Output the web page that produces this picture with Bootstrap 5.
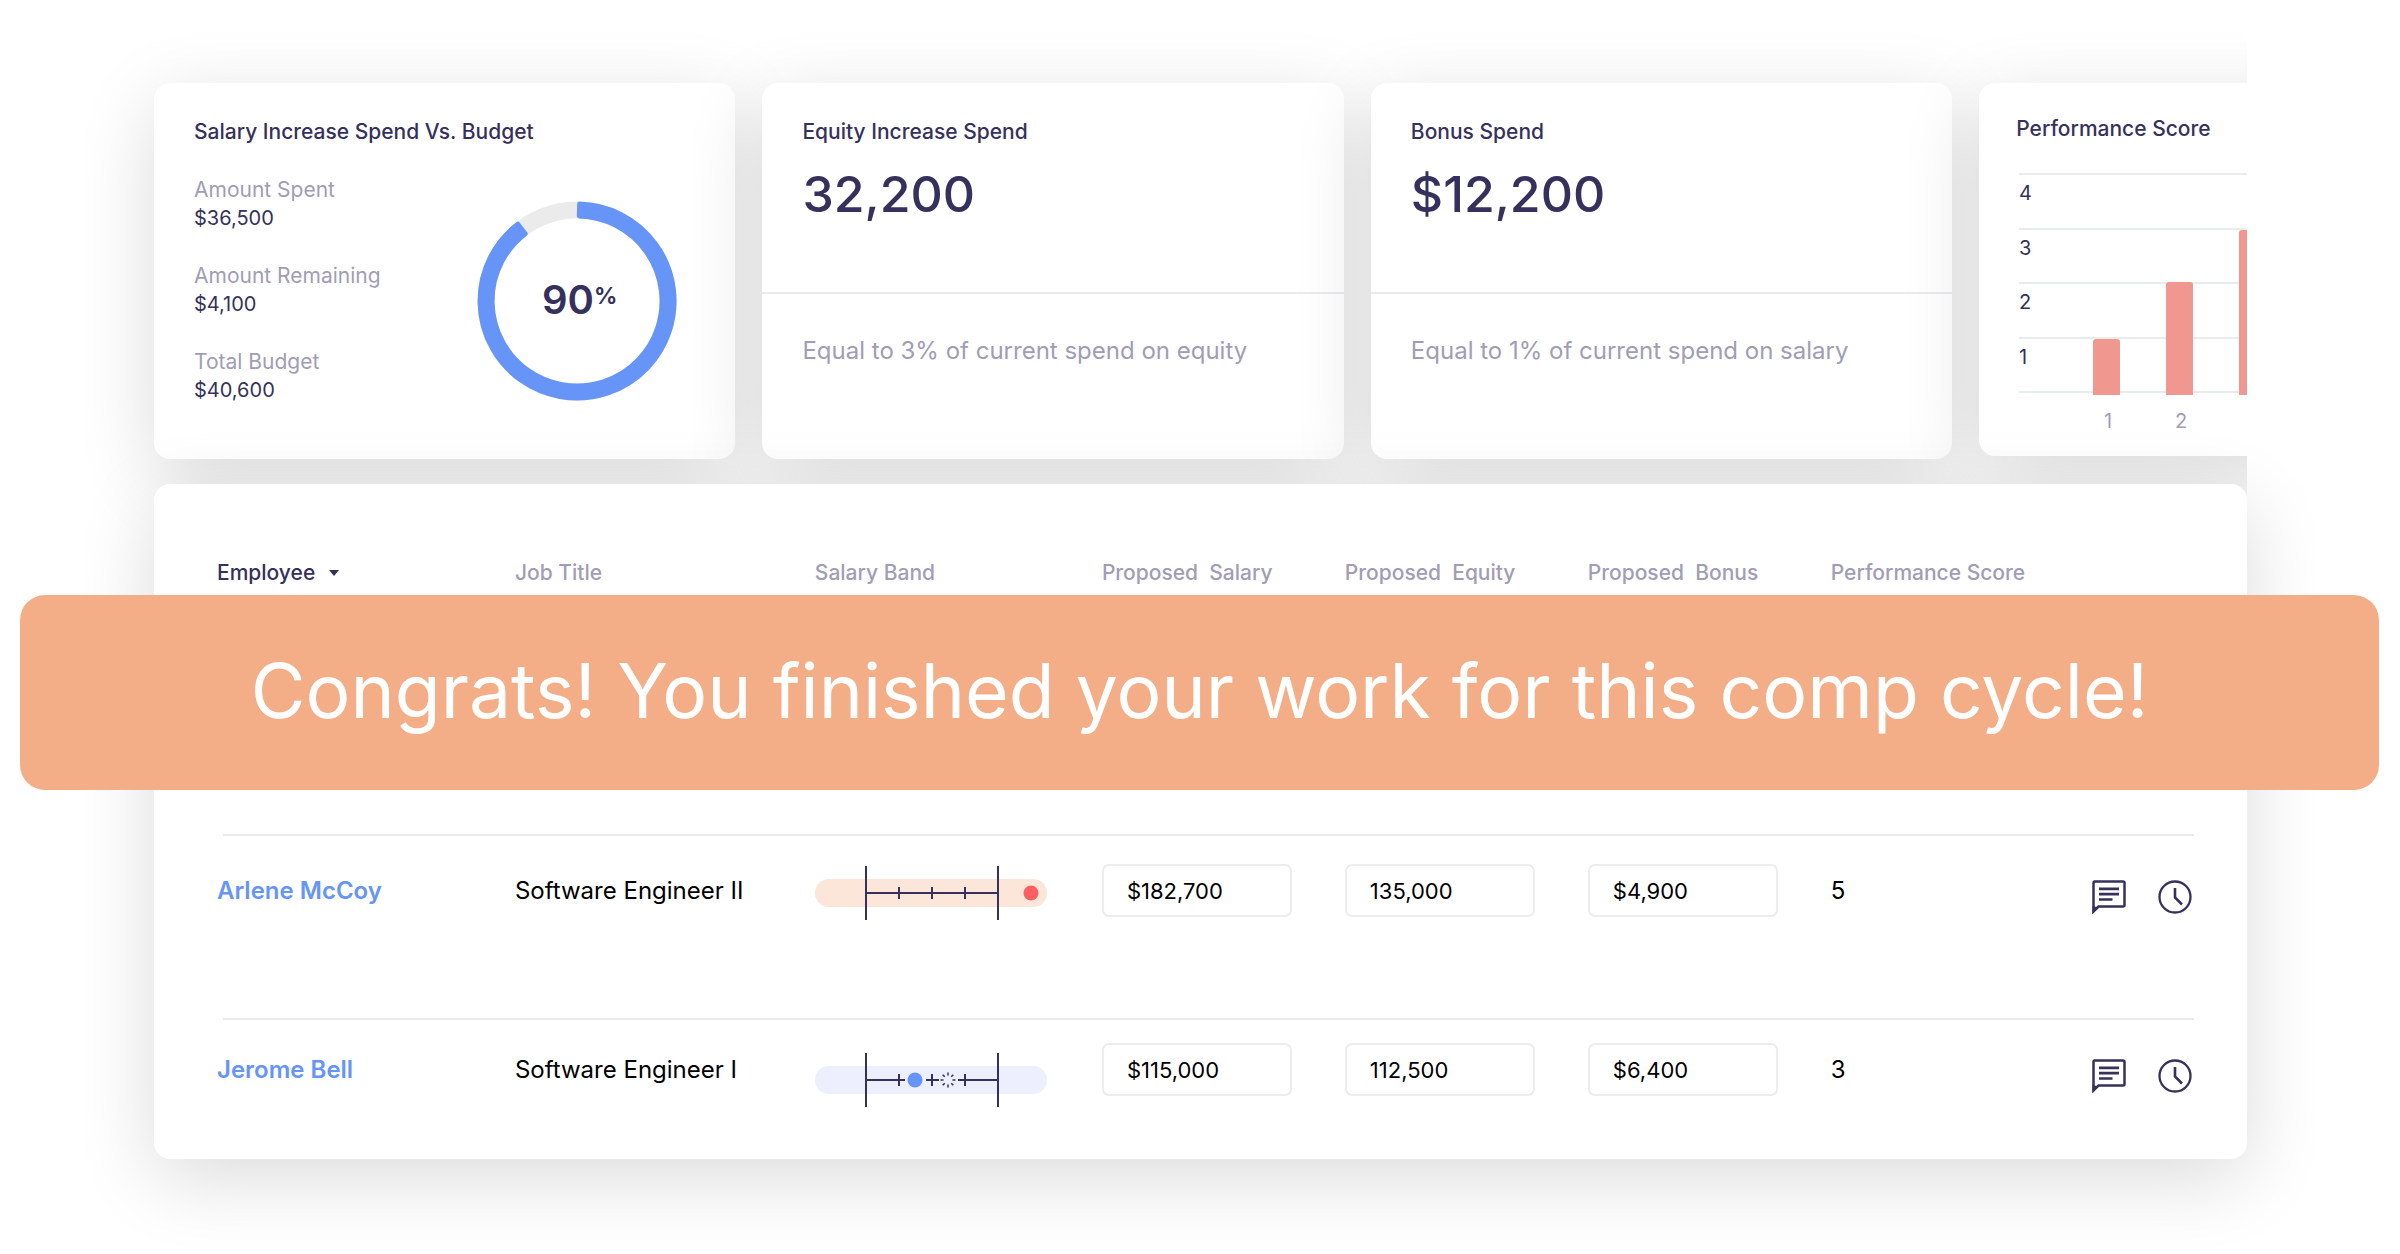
<!DOCTYPE html>
<html lang="en">
<head>
<meta charset="utf-8">
<meta name="viewport" content="width=device-width, initial-scale=1">
<title>Compensation cycle</title>
<link rel="stylesheet" href="https://cdn.jsdelivr.net/npm/bootstrap@5.3.0/dist/css/bootstrap.min.css">
<style>
  :root { --ink:#35315c; --soft:#a09db5; --blue:#6694f7; --coral:#f0978f; --peach:#f3ae87; }
  body { font-family:Inter,"Liberation Sans",sans-serif; color:var(--ink); background:#fff; font-size:20px; line-height:28px; }
  .page { padding:83px 153px 95px 154px; }
  .soft { color:var(--soft); }
  .stats { gap:27px; margin:0 0 25px -154px; padding-left:154px; overflow-x:clip; overflow-y:visible; }
  .stat, .people { border:0; border-radius:16px; box-shadow:0 20px 80px rgba(0,0,0,.14); }
  .stat { flex:0 0 27.78%; height:376px; }
  .stat-title { font-size:21px; line-height:28px; font-weight:500; margin:0; }
  .stat-top { height:209px; padding:35px 40px 0; }
  .stat-foot { border-top:2px solid #ebebef; padding:42px 40px 0; font-size:24px; line-height:30px; }
  .figure-lg { font-size:50px; line-height:68px; font-weight:500; margin-top:14px; }
  .budget { padding:35px 58px 0 40px; }
  .amounts { margin:29px 0 0; line-height:29px; }
  .amounts dt { font-weight:400; font-size:21px; }
  .amounts dd { margin:0 0 28px; }
  .donut { margin-top:55px; }
  .donut text { font-weight:600; fill:var(--ink); }
  .donut tspan { font-weight:700; }
  .chart-card { height:373px; padding:32px 0 0 37px; overflow:hidden; }
  .people { position:relative; padding:74px 53px 0 63px; }
  .people table { table-layout:fixed; width:100%; border-collapse:separate; border-spacing:0; }
  .people th { height:276px; padding:1px 0 0; vertical-align:top; font-size:21px; font-weight:500; color:var(--soft); white-space:nowrap; }
  .sorter { border:0; background:none; padding:0; font-weight:500; color:var(--ink); gap:14px; }
  .people td { border-top:2px solid #e9e9ea; padding:28px 0 0; height:184px; vertical-align:top; color:#000; font-size:24px; line-height:53px; white-space:nowrap; }
  .people td:first-child { border-top-color:transparent; background:linear-gradient(#e9e9ea,#e9e9ea) 6px 0/100% 2px no-repeat border-box; }
  .people tr:last-child td { padding-top:23px; height:141px; }
  .person { color:var(--blue); font-weight:600; text-decoration:none; }
  .people .form-control { width:190px; height:53px; border:2px solid #ededed; border-radius:7px; padding:0 23px; font-size:22px; color:#000; }
  .band { display:block; margin-top:2px; }
  tr:last-child .band { margin-top:10px; }
  .tools { gap:32px; padding-top:16px; }
  .tools button { border:0; background:none; padding:0; line-height:0; color:var(--ink); }
  .notice { position:absolute; left:-134px; right:-132px; top:111px; height:195px; padding-bottom:4px; border-radius:25px; background:var(--peach); color:#fff; font-size:75px; line-height:90px; white-space:nowrap; }
</style>
<script src="https://cdn.jsdelivr.net/npm/bootstrap@5.3.0/dist/js/bootstrap.bundle.min.js"></script>
</head>
<body>
<svg width="0" height="0" class="position-absolute" aria-hidden="true">
  <symbol id="note" viewBox="0 0 34 34"><path d="M2 1.500h29q1.500 0 1.500 1.500v22q0 1.500-1.500 1.500H6.500L1.500 31.500V3q0-1.500 1.500-1.500z" fill="none" stroke="currentColor" stroke-width="2.500"/><path d="M.5 26v7.500l6-6z" fill="currentColor"/><path d="M7 8.800h20M7 14.200h20M7 19.500h13.500" stroke="currentColor" stroke-width="2.700"/></symbol>
  <symbol id="clock" viewBox="0 0 34 34"><circle cx="17" cy="17" r="15.500" fill="none" stroke="currentColor" stroke-width="2.300"/><path d="M17 8v9.500l7 7" fill="none" stroke="currentColor" stroke-width="2.600"/></symbol>
</svg>
<main class="page">
  <section class="stats d-flex">
    <article class="card stat budget">
      <h2 class="stat-title">Salary Increase Spend Vs. Budget</h2>
      <div class="d-flex justify-content-between">
        <dl class="amounts">
          <dt class="soft">Amount Spent</dt><dd>$36,500</dd>
          <dt class="soft">Amount Remaining</dt><dd>$4,100</dd>
          <dt class="soft">Total Budget</dt><dd>$40,600</dd>
        </dl>
        <svg class="donut" width="200" height="200" viewBox="0 0 200 200" role="img" aria-label="90% of budget spent">
          <circle cx="100" cy="100" r="91" fill="none" stroke="#ebebeb" stroke-width="17"/>
          <path d="M102.660 3.040A97 97 0 1 1 40.830 23.200L48.150 32.700A85 85 0 1 0 102.330 15.030Z" fill="#6694f7" stroke="#6694f7" stroke-width="5" stroke-linejoin="round"/>
          <text x="65" y="113" font-size="40">90<tspan dy="-10" font-size="23">%</tspan></text>
        </svg>
      </div>
    </article>
    <article class="card stat">
      <div class="stat-top"><h2 class="stat-title">Equity Increase Spend</h2><div class="figure-lg">32,200</div></div>
      <div class="stat-foot soft">Equal to 3% of current spend on equity</div>
    </article>
    <article class="card stat">
      <div class="stat-top"><h2 class="stat-title">Bonus Spend</h2><div class="figure-lg">$12,200</div></div>
      <div class="stat-foot soft">Equal to 1% of current spend on salary</div>
    </article>
    <article class="card stat chart-card">
      <h2 class="stat-title">Performance Score</h2>
      <svg width="500" height="300" viewBox="0 0 500 300" font-size="20" role="img" aria-label="Performance score distribution">
        <path d="M3 31h497M3 86h497M3 140h497M3 195h497M3 249h497" stroke="#e8edec" stroke-width="2"/>
        <path d="M77 252v-53q0-3 3-3h21q3 0 3 3v53zM150 252V142q0-3 3-3h21q3 0 3 3v110zM223 252V90q0-3 3-3h21q3 0 3 3v162z" fill="#f0978f"/>
        <g fill="#35315c"><text x="3" y="57">4</text><text x="3" y="112">3</text><text x="3" y="166">2</text><text x="3" y="221">1</text></g>
        <g fill="#a09db5" text-anchor="middle"><text x="92" y="285">1</text><text x="165" y="285">2</text></g>
      </svg>
    </article>
  </section>

  <section class="card people">
    <table>
      <colgroup><col style="width:15.070%"><col style="width:15.170%"><col style="width:14.520%"><col style="width:12.290%"><col style="width:12.290%"><col style="width:12.290%"><col style="width:13.200%"><col></colgroup>
      <thead>
        <tr>
          <th><button class="sorter d-inline-flex align-items-center" type="button">Employee<svg width="10" height="6" viewBox="0 0 10 6"><path d="M0 0h10L5 6z" fill="currentColor"/></svg></button></th>
          <th>Job Title</th><th>Salary Band</th><th id="c-sal">Proposed&nbsp; Salary</th><th id="c-eq">Proposed&nbsp; Equity</th><th id="c-bon">Proposed&nbsp; Bonus</th><th>Performance Score</th><th></th>
        </tr>
      </thead>
      <tbody>
        <tr>
          <td><a class="person" href="#">Arlene McCoy</a></td>
          <td>Software Engineer II</td>
          <td><svg class="band" width="232" height="54" viewBox="0 0 232 54"><rect y="13" width="232" height="28" rx="14" fill="#fce5d9"/><path d="M51 0v54M183 0v54M51 27h132M84 21v12M117 21v12M150 21v12" stroke="#35315c" stroke-width="2"/><circle cx="216" cy="27" r="7.500" fill="#ff5f61"/></svg></td>
          <td><input class="form-control" aria-labelledby="c-sal" value="$182,700"></td>
          <td><input class="form-control" aria-labelledby="c-eq" value="135,000"></td>
          <td><input class="form-control" aria-labelledby="c-bon" value="$4,900"></td>
          <td>5</td>
          <td><div class="tools d-flex"><button type="button" aria-label="Comments"><svg width="34" height="34"><use href="#note"/></svg></button><button type="button" aria-label="History"><svg width="34" height="34"><use href="#clock"/></svg></button></div></td>
        </tr>
        <tr>
          <td><a class="person" href="#">Jerome Bell</a></td>
          <td>Software Engineer I</td>
          <td><svg class="band" width="232" height="54" viewBox="0 0 232 54"><rect y="13" width="232" height="28" rx="14" fill="#edefff"/><path d="M51 0v54M183 0v54M51 27h39M111 27h13M143 27h40M84 21v12M117 21v12M150 21v12" stroke="#35315c" stroke-width="2"/><circle cx="100" cy="27" r="7.500" fill="#6694f7"/><path d="M133 19.500v3M133 31.500v3M125.500 27h3M137.500 27h3M127.700 21.700l2.100 2.100M136.200 30.200l2.100 2.100M138.300 21.700l-2.100 2.100M129.800 30.200l-2.100 2.100" stroke="#35315c" stroke-width="1.500"/></svg></td>
          <td><input class="form-control" aria-labelledby="c-sal" value="$115,000"></td>
          <td><input class="form-control" aria-labelledby="c-eq" value="112,500"></td>
          <td><input class="form-control" aria-labelledby="c-bon" value="$6,400"></td>
          <td>3</td>
          <td><div class="tools d-flex"><button type="button" aria-label="Comments"><svg width="34" height="34"><use href="#note"/></svg></button><button type="button" aria-label="History"><svg width="34" height="34"><use href="#clock"/></svg></button></div></td>
        </tr>
      </tbody>
    </table>
    <div class="notice d-flex align-items-center justify-content-center" role="status">Congrats! You finished your work for this comp cycle!</div>
  </section>
</main>
</body>
</html>
